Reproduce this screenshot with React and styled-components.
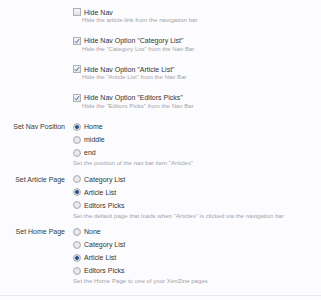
import React from 'react';
import styled, { createGlobalStyle } from 'styled-components';

const Global = createGlobalStyle`
  html, body {
    margin: 0;
    background: #fcfcfe;
  }
  body {
    font-family: "Liberation Sans", Arial, sans-serif;
  }
`;

const Page = styled.div`
  width: 321px;
  height: 300px;
  overflow: hidden;
  padding-top: 8px;
  box-sizing: border-box;
`;

const Row = styled.div`
  display: grid;
  grid-template-columns: 65px 1fr;
  column-gap: 8px;
  padding-bottom: ${(p) => p.$pb || 0}px;
  border-bottom: ${(p) => (p.$last ? '1px solid #e6e6ec' : 'none')};
`;

const RowLabel = styled.div`
  text-align: right;
  font-size: 7px;
  line-height: 13px;
  color: #3a3a3a;
`;

const Controls = styled.div`
  display: flex;
  flex-direction: column;
`;

const CheckBlock = styled.div`
  margin-bottom: ${(p) => p.$mb ?? 12.5}px;
`;

const Option = styled.label`
  display: flex;
  align-items: center;
  gap: 3px;
  height: ${(p) => p.$h || 13}px;
  font-size: 7px;
  color: #333;
`;

const Box = styled.span`
  width: 6px;
  height: 6px;
  border: 1px solid #b0b1b7;
  background: linear-gradient(#f8f8fa, #e2e3e7);
  display: flex;
  align-items: center;
  justify-content: center;
  flex: none;
`;

const Radio = styled.span`
  width: 6px;
  height: 6px;
  border-radius: 50%;
  border: 1px solid #aeb0b6;
  background: ${(p) =>
    p.$on
      ? 'radial-gradient(circle, #2b4f7e 0, #2b4f7e 1.5px, #d3d9e2 2.2px)'
      : 'radial-gradient(circle, #f4f4f6 0, #dcdde1 3px)'};
  flex: none;
`;

const Explain = styled.div`
  font-size: 6.1px;
  line-height: 8px;
  color: #a3a3aa;
  padding-left: ${(p) => p.$indent || 0}px;
  white-space: nowrap;
`;

const Check = () => (
  <svg width="6" height="6" viewBox="0 0 6 6">
    <path d="M0.8 3.2 L2.4 4.8 L5.3 0.9" fill="none" stroke="#4a6c9a" strokeWidth="1" />
  </svg>
);

const checks = [
  { label: 'Hide Nav', explain: 'Hide the article link from the navigation bar', on: false },
  { label: 'Hide Nav Option "Category List"', explain: 'Hide the "Category List" from the Nav Bar', on: true },
  { label: 'Hide Nav Option "Article List"', explain: 'Hide the "Article List" from the Nav Bar', on: true },
  { label: 'Hide Nav Option "Editors Picks"', explain: 'Hide the "Editors Picks" from the Nav Bar', on: true },
];

const radios = [
  {
    title: 'Set Nav Position',
    options: ['Home', 'middle', 'end'],
    selected: 0,
    explain: 'Set the position of the nav bar item "Articles"',
    pb: 5.5,
  },
  {
    title: 'Set Article Page',
    options: ['Category List', 'Article List', 'Editors Picks'],
    selected: 1,
    explain: 'Set the default page that loads when "Articles" is clicked via the navigation bar',
    pb: 5.5,
  },
  {
    title: 'Set Home Page',
    options: ['None', 'Category List', 'Article List', 'Editors Picks'],
    selected: 2,
    explain: 'Set the Home Page to one of your XenZine pages',
    pb: 9.5,
    last: true,
  },
];

export default function App() {
  return (
    <Page>
      <Global />
      <Row>
        <div />
        <Controls>
          {checks.map((c, i) => (
            <CheckBlock key={c.label} $mb={i === 3 ? 10.5 : 12.5}>
              <Option $h={8}>
                <Box>{c.on && <Check />}</Box>
                {c.label}
              </Option>
              <Explain $indent={9}>{c.explain}</Explain>
            </CheckBlock>
          ))}
        </Controls>
      </Row>
      {radios.map((r) => (
        <Row key={r.title} $pb={r.pb} $last={r.last}>
          <RowLabel>{r.title}</RowLabel>
          <Controls>
            {r.options.map((o, i) => (
              <Option key={o}>
                <Radio $on={i === r.selected} />
                {o}
              </Option>
            ))}
            <Explain>{r.explain}</Explain>
          </Controls>
        </Row>
      ))}
    </Page>
  );
}
